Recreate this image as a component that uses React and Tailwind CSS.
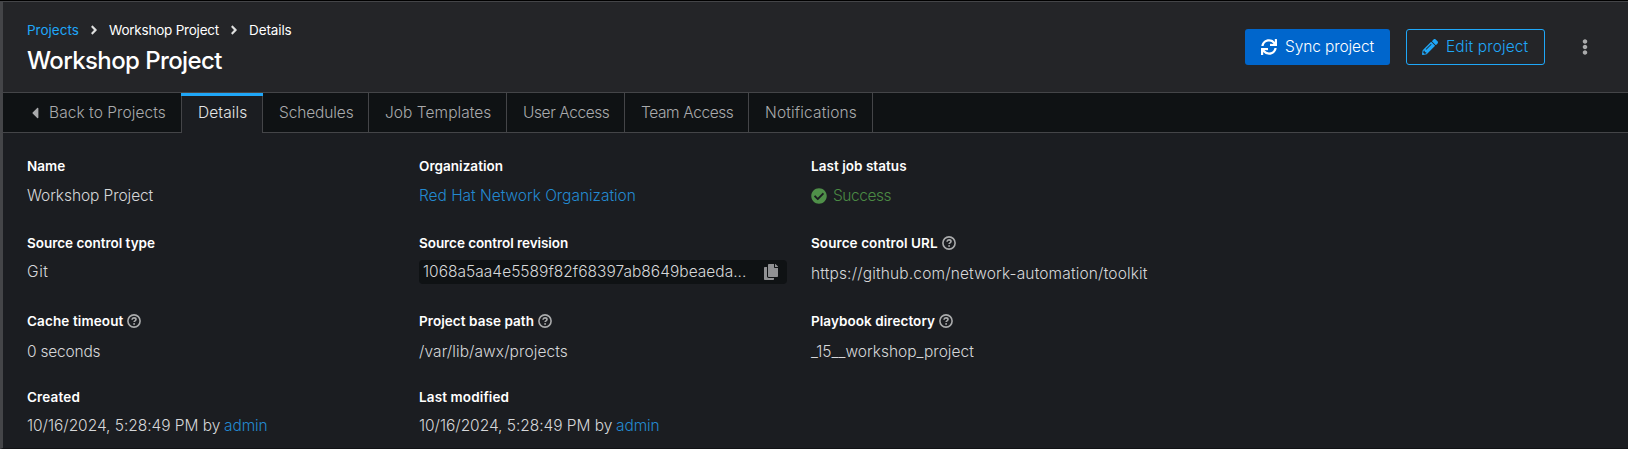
import {
  FaAngleRight,
  FaCaretLeft,
  FaCheckCircle,
  FaCopy,
  FaEllipsisV,
  FaPencilAlt,
  FaSync,
} from "react-icons/fa";

const tabs = [
  { label: "Schedules", width: "w-[106px]", tracking: "tracking-[-0.12px]" },
  { label: "Job Templates", width: "w-[138px]", tracking: "tracking-[0.05px]" },
  { label: "User Access", width: "w-[118px]", tracking: "tracking-[-0.42px]" },
  { label: "Team Access", width: "w-[124px]", tracking: "tracking-[-0.4px]" },
  { label: "Notifications", width: "w-[124px]", tracking: "tracking-[0.15px]" },
];

function HelpIcon() {
  return (
    <svg viewBox="0 0 14 14" className="h-[14px] w-[14px] text-[#aaabac]" fill="none" stroke="currentColor">
      <circle cx="7" cy="7" r="6.1" strokeWidth="1.6" />
      <path d="M5 5.7C5.1 4.5 5.9 3.9 7 3.9c1.2 0 2 .7 2 1.6 0 1.3-1.9 1.3-1.9 2.6" strokeWidth="1.6" />
      <circle cx="7.1" cy="9.9" r="0.95" fill="currentColor" stroke="none" />
    </svg>
  );
}

function Detail({ label, help, tracking = "tracking-[0.04px]", gap = "mt-[7px]", children }) {
  return (
    <div className="whitespace-nowrap">
      <dt className="flex h-5 items-center gap-1 text-[13.5px] font-semibold text-white">
        <span className={tracking}>{label}</span>
        {help && <HelpIcon />}
      </dt>
      <dd className={`flex h-6 items-center text-[15.5px] font-light text-[#d6d7d9] ${gap}`}>{children}</dd>
    </div>
  );
}

function Stamp() {
  return (
    <>
      <span className="w-[197px] tracking-[-0.04px]">10/16/2024, 5:28:49 PM by</span>
      <a className="tracking-[-0.1px] text-[#2389d0]">admin</a>
    </>
  );
}

export default function App() {
  return (
    <div className="flex h-[449px] flex-col border-t border-black bg-[#1b1d21] font-['Inter',sans-serif]">
      <div className="flex min-h-0 flex-1 flex-col border-b border-l-[3px] border-b-[#121316] border-l-[#444548]">
        <header className="flex h-[92px] shrink-0 justify-between border-y border-[#444548] bg-[#242528] pr-8 pl-6">
          <div className="pt-[18px]">
            <nav className="flex h-5 items-center text-[13.5px] text-white">
              <a className="w-[64px] text-[#1fa7f8]">Projects</a>
              <FaAngleRight className="-ml-[2px] h-[14px] w-[10px] text-[#e0e0e0]" />
              <span className="ml-[10px] w-[121px] tracking-[-0.22px]">Workshop Project</span>
              <FaAngleRight className="-ml-px h-[14px] w-[10px] text-[#e0e0e0]" />
              <span className="ml-[10px] tracking-[-0.1px]">Details</span>
            </nav>
            <h1 className="mt-[3px] h-9 text-2xl leading-9 font-medium tracking-[-0.6px] text-white">Workshop Project</h1>
          </div>
          <div className="flex items-start pt-[27px]">
            <button className="flex h-9 w-[145px] items-center gap-2 rounded-[3px] bg-[#0066cc] pl-4 text-[15.5px] font-light text-white">
              <FaSync className="h-4 w-4" />
              <span className="tracking-[-0.1px]">Sync project</span>
            </button>
            <button className="ml-4 flex h-9 w-[139px] items-center gap-2 rounded-[3px] border border-[#1fa7f8] pl-[15px] text-[15.5px] font-light text-[#1fa7f8]">
              <FaPencilAlt className="h-4 w-4" />
              <span className="tracking-[0.12px]">Edit project</span>
            </button>
            <button className="ml-[29px] flex h-9 w-[22px] items-center justify-center">
              <FaEllipsisV className="h-4 w-4 text-[#aaabac]" />
            </button>
          </div>
        </header>

        <div className="flex h-10 shrink-0 bg-[#0f1214] text-[15.5px] font-light whitespace-nowrap text-[#a9aaac]">
          <div className="flex w-[179px] items-center border-r border-b border-[#444548] pl-[28px]">
            <FaCaretLeft className="h-[18px] w-2 shrink-0" />
            <span className="ml-[10px] tracking-[0.06px]">Back to Projects</span>
          </div>
          <div className="relative flex w-[81px] items-center border-r border-[#444548] bg-[#1b1d21] pl-4 text-[#e4e5e6]">
            <span className="absolute top-0 -right-px -left-px h-[3px] bg-[#1fa7f8]" />
            <span className="tracking-[0.1px]">Details</span>
          </div>
          {tabs.map((t) => (
            <div key={t.label} className={`flex items-center border-r border-b border-[#444548] pl-4 ${t.width}`}>
              <span className={t.tracking}>{t.label}</span>
            </div>
          ))}
          <div className="flex-1 border-b border-[#444548]" />
        </div>

        <dl className="grid grid-cols-[392px_392px_392px] grid-rows-[77px_78px_76px_50px] pt-[23px] pl-6">
          <Detail label="Name" gap="mt-2">
            <span className="tracking-[-0.08px]">Workshop Project</span>
          </Detail>
          <Detail label="Organization" gap="mt-2">
            <a className="tracking-[-0.04px] text-[#2389d0]">Red Hat Network Organization</a>
          </Detail>
          <Detail label="Last job status" gap="mt-2">
            <FaCheckCircle className="h-4 w-4 text-[#4f8f49]" />
            <span className="ml-[6px] tracking-[-0.45px] text-[#4b8a44]">Success</span>
          </Detail>

          <Detail label="Source control type" tracking="tracking-[-0.02px]">
            <span className="tracking-[0.6px]">Git</span>
          </Detail>
          <Detail label="Source control revision" tracking="tracking-[-0.06px]">
            <div className="flex h-6 w-[368px] items-center justify-between rounded-[4px] bg-[#0f1214] pr-[9px] pl-1">
              <span className="tracking-[0.02px]">1068a5aa4e5589f82f68397ab8649beaeda...</span>
              <FaCopy className="h-4 w-[14px] text-[#909193]" />
            </div>
          </Detail>
          <Detail label="Source control URL" help tracking="tracking-[0.08px]" gap="mt-[9px]">
            <span className="tracking-[0.15px]">https://github.com/network-automation/toolkit</span>
          </Detail>

          <Detail label="Cache timeout" help tracking="tracking-[0.12px]" gap="mt-[9px]">
            <span className="tracking-[-0.2px]">0 seconds</span>
          </Detail>
          <Detail label="Project base path" help tracking="tracking-[0.06px]" gap="mt-[9px]">
            <span className="tracking-[0.08px]">/var/lib/awx/projects</span>
          </Detail>
          <Detail label="Playbook directory" help tracking="tracking-[0.06px]" gap="mt-[9px]">
            _15__workshop_project
          </Detail>

          <Detail label="Created" tracking="tracking-[0.15px]">
            <Stamp />
          </Detail>
          <Detail label="Last modified" tracking="tracking-[0.12px]">
            <Stamp />
          </Detail>
        </dl>
      </div>
    </div>
  );
}
